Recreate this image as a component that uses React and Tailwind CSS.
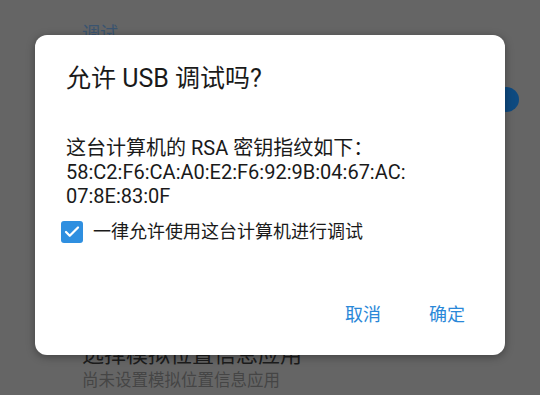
import { Check } from "lucide-react";

const font = { fontFamily: "Roboto, 'Noto Sans CJK SC', sans-serif" };

export default function App() {
  return (
    <div
      className="relative w-[540px] h-[395px] overflow-hidden bg-[#656565]"
      style={font}
    >
      {/* page behind the dim */}
      <div className="flex flex-col pl-[82px] pt-[22px]">
        <p className="text-[18px] leading-[24px] text-[#3a5470]">调试</p>
        <div className="h-[295px]" />
        <p className="text-[22px] leading-[28px] text-[#1c1c1c]">选择模拟位置信息应用</p>
        <p className="text-[16.5px] leading-[24px] text-[#454545]">尚未设置模拟位置信息应用</p>
      </div>
      <div className="absolute left-[494px] top-[87px] w-[25px] h-[25px] rounded-full bg-[#0e4a80]" />

      {/* dialog */}
      <div className="absolute left-[35px] top-[35px] w-[470px] h-[320px] rounded-[12px] bg-white shadow-[0_2px_8px_rgba(0,0,0,0.35)] flex flex-col px-[31px] pt-[26px] text-[#1a1a1a]">
        <h2 className="text-[25px] leading-[36px]">允许 USB 调试吗?</h2>
        <div className="mt-[39px] text-[20px] leading-[24px]">
          <p>这台计算机的 RSA 密钥指纹如下：</p>
          <p>58:C2:F6:CA:A0:E2:F6:92:9B:04:67:AC:</p>
          <p>07:8E:83:0F</p>
        </div>
        <label className="mt-[11px] flex items-center gap-[10px] -ml-[5px]">
          <span className="w-[22px] h-[22px] rounded-[3px] bg-[#2f8fe0] flex items-center justify-center">
            <Check size={18} strokeWidth={3} className="text-white" />
          </span>
          <span className="text-[18px] leading-[26px]">一律允许使用这台计算机进行调试</span>
        </label>
        <div className="mt-auto mb-[28px] flex justify-end gap-[48px] pr-[9px] text-[18px] leading-[24px] text-[#2a88d8]">
          <button>取消</button>
          <button>确定</button>
        </div>
      </div>
    </div>
  );
}
